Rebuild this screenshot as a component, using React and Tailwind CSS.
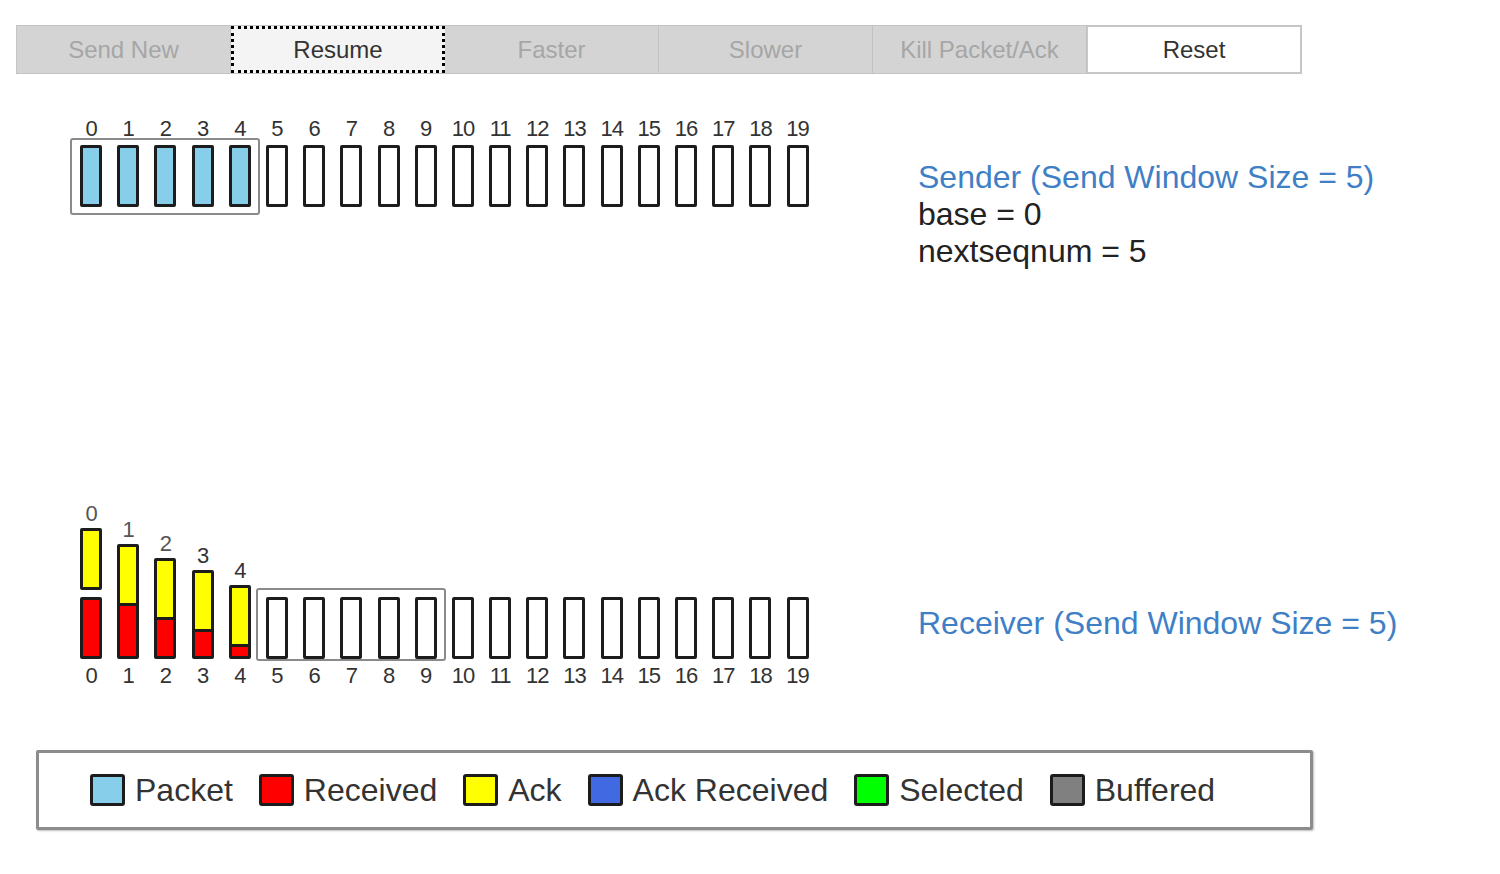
const SLOTS = Array.from({ length: 20 }, (_, i) => i);

const buttons = [
  { label: "Send New", kind: "disabled" },
  { label: "Resume", kind: "focus" },
  { label: "Faster", kind: "disabled" },
  { label: "Slower", kind: "disabled" },
  { label: "Kill Packet/Ack", kind: "disabled" },
  { label: "Reset", kind: "active" },
];

// acks travelling back up toward the sender
const acks = [
  { top: -69, label: "text-[#555]" },
  { top: -53, label: "text-[#555]" },
  { top: -39, label: "text-[#555]" },
  { top: -27, label: "text-[#5b6a98]" },
  { top: -12, label: "text-[#5b6a98]" },
];

const legend = [
  { name: "Packet", color: "bg-[#87ceeb]" },
  { name: "Received", color: "bg-[#ff0000]" },
  { name: "Ack", color: "bg-[#ffff00]" },
  { name: "Ack Received", color: "bg-[#4169e1]" },
  { name: "Selected", color: "bg-[#00ff00]" },
  { name: "Buffered", color: "bg-[#808080]" },
];

function Toolbar() {
  return (
    <div className="flex w-[1286px] h-[49px] border border-[#c4c4c4] bg-[#d4d4d4]">
      {buttons.map(b => (
        <div
          key={b.label}
          className={
            b.kind === "focus"
              ? "w-[214px] h-full flex items-center justify-center bg-[#f4f4f4] border-[3px] border-dotted border-black text-[#333] text-[24px]"
              : b.kind === "active"
              ? "w-[214px] h-full flex items-center justify-center bg-white border border-[#c8c8c8] text-[#333] text-[24px]"
              : "w-[214px] h-full flex items-center justify-center border-r border-[#c2c2c2] text-[#a6a6a6] text-[24px]"
          }
        >
          {b.label}
        </div>
      ))}
    </div>
  );
}

function Box({ fill }) {
  return <div className={`w-[22px] h-[62px] border-[3px] border-[#1c1c1c] rounded-[2px] ${fill || "bg-white"}`} />;
}

function Num({ n, className }) {
  return <div className={`w-[22px] flex justify-center text-[22px] leading-[24px] text-[#333] tracking-[-1px] ${className || ""}`}>{n}</div>;
}

function SenderLane() {
  return (
    <div className="relative flex gap-[15.2px]">
      <div className="absolute left-[-10px] top-[21px] w-[190px] h-[77px] border-2 border-[#8a8a8a] rounded-[3px]" />
      {SLOTS.map(i => (
        <div key={i} className="flex flex-col items-center gap-[4px]">
          <Num n={i} />
          <Box fill={i < 5 ? "bg-[#87ceeb]" : ""} />
        </div>
      ))}
    </div>
  );
}

function ReceiverLane() {
  return (
    <div className="relative flex gap-[15.2px]">
      <div className="absolute left-[176px] top-[-9px] w-[190px] h-[73px] border-2 border-[#8a8a8a] rounded-[3px]" />
      {SLOTS.map(i => {
        const ack = acks[i];
        return (
          <div key={i} className="flex flex-col items-center gap-[5px]">
            <div className="relative">
              <Box fill={i < 5 ? "bg-[#ff0000]" : ""} />
              {ack && (
                <div className="absolute left-0" style={{ top: ack.top }}>
                  <Num n={i} className={`absolute top-[-26px] left-0 ${ack.label}`} />
                  <Box fill="bg-[#ffff00]" />
                </div>
              )}
            </div>
            <Num n={i} />
          </div>
        );
      })}
    </div>
  );
}

export default function App() {
  return (
    <div className="min-h-[874px] bg-white font-['Liberation_Sans',Arial,sans-serif] text-[#222]">
      <div className="pl-[16px] pt-[25px]">
        <Toolbar />
      </div>

      <div className="flex items-start mt-[43px] pl-[80px]">
        <div className="w-[838px]">
          <SenderLane />
        </div>
        <div className="pt-[42px] text-[32px] leading-[37px]">
          <div className="text-[#3f7fc6]">Sender (Send Window Size = 5)</div>
          <div>base = 0</div>
          <div>nextseqnum = 5</div>
        </div>
      </div>

      <div className="flex items-start mt-[327px] pl-[80px]">
        <div className="w-[838px]">
          <ReceiverLane />
        </div>
        <div className="pt-[8px] text-[32px] leading-[37px] text-[#3f7fc6]">
          Receiver (Send Window Size = 5)
        </div>
      </div>

      <div className="ml-[36px] mt-[62px] w-[1277px] h-[80px] border-[3px] border-[#8c8c8c] rounded-[2px] shadow-[1px_1px_2px_rgba(0,0,0,0.25)] flex items-center pl-[51px] gap-[26px]">
        {legend.map(l => (
          <div key={l.name} className="flex items-center gap-[10px]">
            <div className={`w-[35px] h-[32px] border-[3px] border-[#1c1c1c] rounded-[3px] ${l.color}`} />
            <span className="text-[32px] leading-[37px] text-[#333]">{l.name}</span>
          </div>
        ))}
      </div>
    </div>
  );
}
